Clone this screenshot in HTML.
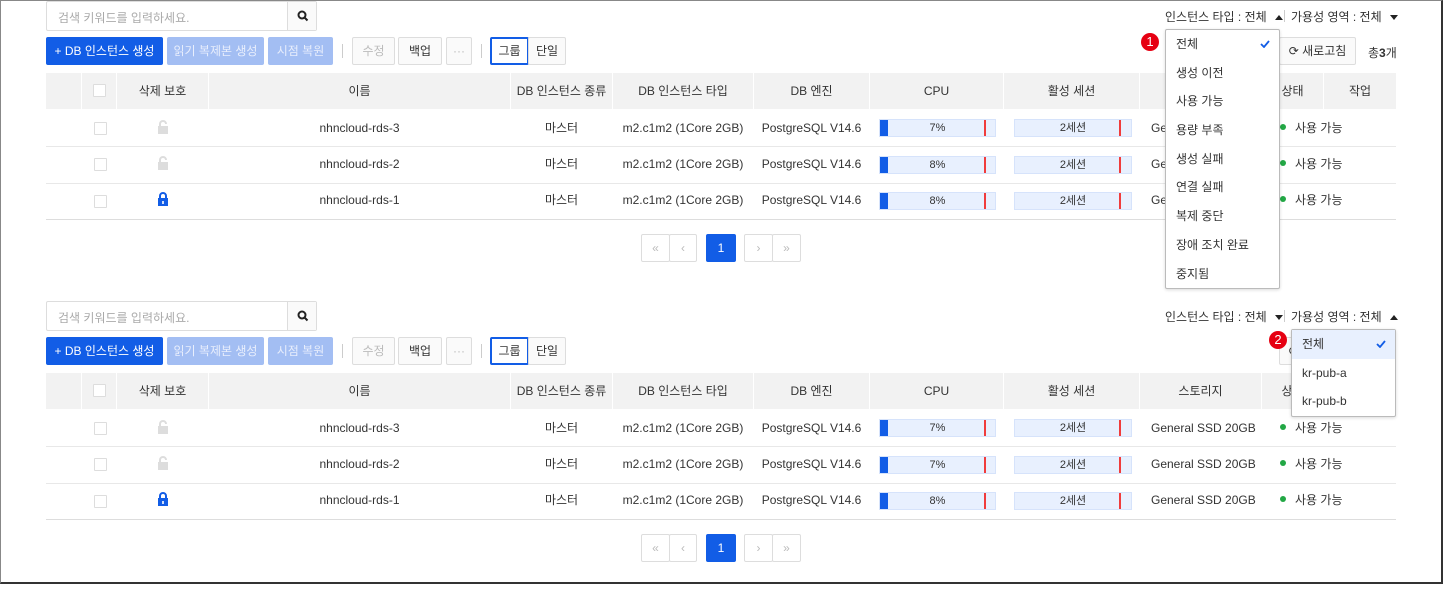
<!DOCTYPE html>
<html><head><meta charset="utf-8"><style>
*{box-sizing:border-box;margin:0;padding:0}
body{width:1443px;height:584px;background:#fff;position:relative;overflow:hidden;font-family:"Liberation Sans","Noto Sans CJK KR",sans-serif;font-size:12px;color:#333}
.frame{position:absolute;left:0;top:0;width:1443px;height:584px;border-left:1px solid #888;border-top:1px solid #888;border-right:2px solid #333;border-bottom:2px solid #333;z-index:50;pointer-events:none}
.sec{position:absolute;left:0;width:1443px;height:290px}
.a{position:absolute}
.search{left:46px;top:1px;width:271px;height:30px;border:1px solid #ddd;border-radius:2px;background:#fff}
.search span{position:absolute;left:11px;top:7px;color:#aaa;font-size:12px}
.search i{position:absolute;right:0;top:0;width:29px;height:28px;border-left:1px solid #ddd;background:#fafafa}
.btn{height:28px;top:37px;border-radius:2px;text-align:center;line-height:28px;font-size:12px}
.pri{background:#125de6;color:#fff}
.dis{background:#a3bef3;color:#e8eefc}
.wb{border:1px solid #ddd;background:#fafafa;color:#333;line-height:26px}
.wb.g{color:#bbb}
.sep{width:1px;height:14px;top:44px;background:#ccc}
.th{top:73px;height:36px;background:#f2f2f2;line-height:36px;text-align:center;font-size:12px;color:#333}
.row{left:46px;width:1350px;height:1px;background:#e8e8e8}
.td{height:36px;line-height:36px;text-align:center;font-size:12px;color:#333}
.cb{width:13px;height:13px;border:1px solid #ddd;background:#fff;border-radius:1px}
.bar{height:18px;background:#e8f0fe;border:1px solid #d6e3fb;text-align:center;line-height:16px;font-size:11px;color:#333}
.bar .bl{position:absolute;left:0;top:0;width:8px;height:16px;background:#125de6}
.bar .rd{position:absolute;top:0;left:104px;width:2px;height:16px;background:#f03c3c}
.dot{width:6px;height:6px;border-radius:50%;background:#22a745}
.pg{top:234px;height:28px;border:1px solid #ddd;border-radius:2px;background:#fff;color:#bbb;text-align:center;line-height:26px;font-size:12px}
.dd{background:#fff;border:1px solid #bbb;border-radius:2px;box-shadow:0 1px 3px rgba(0,0,0,.15);z-index:10}
.dd div{height:28.7px;line-height:28.7px;padding-left:10px;font-size:12px;color:#333;position:relative}
.chk{position:absolute;right:9px;top:10px}
.badge{width:18px;height:18px;border-radius:50%;background:#e60012;color:#fff;text-align:center;line-height:18px;font-size:13px;z-index:11}
.flt{top:8px;font-size:12px;color:#333}
.tri{display:inline-block;margin-left:8px;vertical-align:middle}
</style></head><body>
<div class="frame"></div>

<!-- SECTION 1 -->
<div class="sec" style="top:0">
<div class="a search"><span>검색 키워드를 입력하세요.</span><i><svg width="29" height="28" viewBox="0 0 29 28"><circle cx="14" cy="13" r="3.5" fill="none" stroke="#222" stroke-width="2"/><path d="M16.5 15.5l3 3" stroke="#222" stroke-width="2"/></svg></i></div>
<div class="a flt" style="left:1165px">인스턴스 타입 : 전체<svg class="tri" width="8" height="5"><path d="M0 5L4 0L8 5Z" fill="#222"/></svg></div>
<div class="a" style="left:1284px;top:10px;width:1px;height:12px;background:#ccc"></div>
<div class="a flt" style="left:1291px">가용성 영역 : 전체<svg class="tri" width="8" height="5"><path d="M0 0L4 5L8 0Z" fill="#222"/></svg></div>

<div class="a btn pri" style="left:46px;width:117px">+ DB 인스턴스 생성</div>
<div class="a btn dis" style="left:167px;width:97px">읽기 복제본 생성</div>
<div class="a btn dis" style="left:268px;width:65px">시점 복원</div>
<div class="a sep" style="left:342px"></div>
<div class="a btn wb g" style="left:352px;width:43px">수정</div>
<div class="a btn wb" style="left:398px;width:44px">백업</div>
<div class="a btn wb g" style="left:446px;width:26px">···</div>
<div class="a sep" style="left:481px"></div>
<div class="a btn wb" style="left:490px;width:39px;border:2px solid #125de6;background:#fff;line-height:24px">그룹</div>
<div class="a btn wb" style="left:528px;width:38px">단일</div>
<div class="a btn wb" style="left:1279px;width:77px">⟳ 새로고침</div>
<div class="a" style="left:1368px;top:44px">총<b>3</b>개</div>

<div class="a th" style="left:46px;width:35px"></div>
<div class="a th" style="left:82px;width:34px"><div class="a cb" style="left:11px;top:11px"></div></div>
<div class="a th" style="left:117px;width:91px">삭제 보호</div>
<div class="a th" style="left:209px;width:301px">이름</div>
<div class="a th" style="left:511px;width:101px">DB 인스턴스 종류</div>
<div class="a th" style="left:613px;width:140px">DB 인스턴스 타입</div>
<div class="a th" style="left:754px;width:115px">DB 엔진</div>
<div class="a th" style="left:870px;width:133px">CPU</div>
<div class="a th" style="left:1004px;width:135px">활성 세션</div>
<div class="a th" style="left:1140px;width:121px">스토리지</div>
<div class="a th" style="left:1262px;width:61px">상태</div>
<div class="a th" style="left:1324px;width:72px">작업</div>

<div class="a cb" style="left:94px;top:122px"></div>
<div class="a cb" style="left:94px;top:158px"></div>
<div class="a cb" style="left:94px;top:195px"></div>
<svg class="a" style="left:157px;top:120px" width="12" height="14"><path d="M3 6V4a3 3 0 0 1 6 0" fill="none" stroke="#ddd" stroke-width="2"/><rect x="1" y="6" width="10" height="8" fill="#ddd"/></svg>
<svg class="a" style="left:157px;top:156px" width="12" height="14"><path d="M3 6V4a3 3 0 0 1 6 0" fill="none" stroke="#ddd" stroke-width="2"/><rect x="1" y="6" width="10" height="8" fill="#ddd"/></svg>
<svg class="a" style="left:157px;top:192px" width="12" height="14"><path d="M3 7V4a3 3 0 0 1 6 0v3" fill="none" stroke="#125de6" stroke-width="2"/><rect x="1" y="6" width="10" height="8" fill="#125de6"/><rect x="5.2" y="9" width="1.6" height="3" fill="#fff"/></svg>

<div class="a td" style="left:209px;width:301px;top:110px">nhncloud-rds-3</div>
<div class="a td" style="left:209px;width:301px;top:146px">nhncloud-rds-2</div>
<div class="a td" style="left:209px;width:301px;top:182px">nhncloud-rds-1</div>
<div class="a td" style="left:511px;width:101px;top:110px">마스터</div>
<div class="a td" style="left:511px;width:101px;top:146px">마스터</div>
<div class="a td" style="left:511px;width:101px;top:182px">마스터</div>
<div class="a td" style="left:613px;width:140px;top:110px">m2.c1m2 (1Core 2GB)</div>
<div class="a td" style="left:613px;width:140px;top:146px">m2.c1m2 (1Core 2GB)</div>
<div class="a td" style="left:613px;width:140px;top:182px">m2.c1m2 (1Core 2GB)</div>
<div class="a td" style="left:754px;width:115px;top:110px">PostgreSQL V14.6</div>
<div class="a td" style="left:754px;width:115px;top:146px">PostgreSQL V14.6</div>
<div class="a td" style="left:754px;width:115px;top:182px">PostgreSQL V14.6</div>
<div class="a bar" style="left:879px;width:117px;top:119px"><span class="bl"></span><span class="rd"></span>7%</div>
<div class="a bar" style="left:879px;width:117px;top:156px"><span class="bl"></span><span class="rd"></span>8%</div>
<div class="a bar" style="left:879px;width:117px;top:192px"><span class="bl"></span><span class="rd"></span>8%</div>
<div class="a bar" style="left:1014px;width:118px;top:119px"><span class="rd"></span>2세션</div>
<div class="a bar" style="left:1014px;width:118px;top:156px"><span class="rd"></span>2세션</div>
<div class="a bar" style="left:1014px;width:118px;top:192px"><span class="rd"></span>2세션</div>
<div class="a td" style="left:1151px;top:110px">General SSD 20GB</div>
<div class="a td" style="left:1151px;top:146px">General SSD 20GB</div>
<div class="a td" style="left:1151px;top:182px">General SSD 20GB</div>
<div class="a dot" style="left:1280px;top:124px"></div><div class="a" style="left:1295px;top:119px">사용 가능</div>
<div class="a dot" style="left:1280px;top:160px"></div><div class="a" style="left:1295px;top:155px">사용 가능</div>
<div class="a dot" style="left:1280px;top:196px"></div><div class="a" style="left:1295px;top:191px">사용 가능</div>
<div class="a row" style="top:146px"></div>
<div class="a row" style="top:183px"></div>
<div class="a row" style="top:219px;background:#ddd"></div>

<div class="a pg" style="left:641px;width:29px">«</div>
<div class="a pg" style="left:669px;width:28px">‹</div>
<div class="a pg" style="left:706px;width:30px;background:#125de6;border-color:#125de6;color:#fff">1</div>
<div class="a pg" style="left:744px;width:29px">›</div>
<div class="a pg" style="left:772px;width:29px">»</div>

<div class="a badge" style="left:1141px;top:33px">1</div>
<div class="a dd" style="left:1165px;top:29px;width:115px;height:260px">
<div>전체<svg class="chk" width="10" height="8"><path d="M1 4l3 3 5-6" fill="none" stroke="#125de6" stroke-width="1.8"/></svg></div><div>생성 이전</div><div>사용 가능</div><div>용량 부족</div><div>생성 실패</div><div>연결 실패</div><div>복제 중단</div><div>장애 조치 완료</div><div>중지됨</div>
</div>
</div>

<!-- SECTION 2 -->
<div class="sec" style="top:300px">
<div class="a search"><span>검색 키워드를 입력하세요.</span><i><svg width="29" height="28" viewBox="0 0 29 28"><circle cx="14" cy="13" r="3.5" fill="none" stroke="#222" stroke-width="2"/><path d="M16.5 15.5l3 3" stroke="#222" stroke-width="2"/></svg></i></div>
<div class="a flt" style="left:1165px">인스턴스 타입 : 전체<svg class="tri" width="8" height="5"><path d="M0 0L4 5L8 0Z" fill="#222"/></svg></div>
<div class="a" style="left:1284px;top:10px;width:1px;height:12px;background:#ccc"></div>
<div class="a flt" style="left:1291px">가용성 영역 : 전체<svg class="tri" width="8" height="5"><path d="M0 5L4 0L8 5Z" fill="#222"/></svg></div>

<div class="a btn pri" style="left:46px;width:117px">+ DB 인스턴스 생성</div>
<div class="a btn dis" style="left:167px;width:97px">읽기 복제본 생성</div>
<div class="a btn dis" style="left:268px;width:65px">시점 복원</div>
<div class="a sep" style="left:342px"></div>
<div class="a btn wb g" style="left:352px;width:43px">수정</div>
<div class="a btn wb" style="left:398px;width:44px">백업</div>
<div class="a btn wb g" style="left:446px;width:26px">···</div>
<div class="a sep" style="left:481px"></div>
<div class="a btn wb" style="left:490px;width:39px;border:2px solid #125de6;background:#fff;line-height:24px">그룹</div>
<div class="a btn wb" style="left:528px;width:38px">단일</div>
<div class="a btn wb" style="left:1279px;width:77px">⟳ 새로고침</div>

<div class="a th" style="left:46px;width:35px"></div>
<div class="a th" style="left:82px;width:34px"><div class="a cb" style="left:11px;top:11px"></div></div>
<div class="a th" style="left:117px;width:91px">삭제 보호</div>
<div class="a th" style="left:209px;width:301px">이름</div>
<div class="a th" style="left:511px;width:101px">DB 인스턴스 종류</div>
<div class="a th" style="left:613px;width:140px">DB 인스턴스 타입</div>
<div class="a th" style="left:754px;width:115px">DB 엔진</div>
<div class="a th" style="left:870px;width:133px">CPU</div>
<div class="a th" style="left:1004px;width:135px">활성 세션</div>
<div class="a th" style="left:1140px;width:121px">스토리지</div>
<div class="a th" style="left:1262px;width:61px">상태</div>
<div class="a th" style="left:1324px;width:72px">작업</div>

<div class="a cb" style="left:94px;top:122px"></div>
<div class="a cb" style="left:94px;top:158px"></div>
<div class="a cb" style="left:94px;top:195px"></div>
<svg class="a" style="left:157px;top:120px" width="12" height="14"><path d="M3 6V4a3 3 0 0 1 6 0" fill="none" stroke="#ddd" stroke-width="2"/><rect x="1" y="6" width="10" height="8" fill="#ddd"/></svg>
<svg class="a" style="left:157px;top:156px" width="12" height="14"><path d="M3 6V4a3 3 0 0 1 6 0" fill="none" stroke="#ddd" stroke-width="2"/><rect x="1" y="6" width="10" height="8" fill="#ddd"/></svg>
<svg class="a" style="left:157px;top:192px" width="12" height="14"><path d="M3 7V4a3 3 0 0 1 6 0v3" fill="none" stroke="#125de6" stroke-width="2"/><rect x="1" y="6" width="10" height="8" fill="#125de6"/><rect x="5.2" y="9" width="1.6" height="3" fill="#fff"/></svg>

<div class="a td" style="left:209px;width:301px;top:110px">nhncloud-rds-3</div>
<div class="a td" style="left:209px;width:301px;top:146px">nhncloud-rds-2</div>
<div class="a td" style="left:209px;width:301px;top:182px">nhncloud-rds-1</div>
<div class="a td" style="left:511px;width:101px;top:110px">마스터</div>
<div class="a td" style="left:511px;width:101px;top:146px">마스터</div>
<div class="a td" style="left:511px;width:101px;top:182px">마스터</div>
<div class="a td" style="left:613px;width:140px;top:110px">m2.c1m2 (1Core 2GB)</div>
<div class="a td" style="left:613px;width:140px;top:146px">m2.c1m2 (1Core 2GB)</div>
<div class="a td" style="left:613px;width:140px;top:182px">m2.c1m2 (1Core 2GB)</div>
<div class="a td" style="left:754px;width:115px;top:110px">PostgreSQL V14.6</div>
<div class="a td" style="left:754px;width:115px;top:146px">PostgreSQL V14.6</div>
<div class="a td" style="left:754px;width:115px;top:182px">PostgreSQL V14.6</div>
<div class="a bar" style="left:879px;width:117px;top:119px"><span class="bl"></span><span class="rd"></span>7%</div>
<div class="a bar" style="left:879px;width:117px;top:156px"><span class="bl"></span><span class="rd"></span>7%</div>
<div class="a bar" style="left:879px;width:117px;top:192px"><span class="bl"></span><span class="rd"></span>8%</div>
<div class="a bar" style="left:1014px;width:118px;top:119px"><span class="rd"></span>2세션</div>
<div class="a bar" style="left:1014px;width:118px;top:156px"><span class="rd"></span>2세션</div>
<div class="a bar" style="left:1014px;width:118px;top:192px"><span class="rd"></span>2세션</div>
<div class="a td" style="left:1151px;top:110px">General SSD 20GB</div>
<div class="a td" style="left:1151px;top:146px">General SSD 20GB</div>
<div class="a td" style="left:1151px;top:182px">General SSD 20GB</div>
<div class="a dot" style="left:1280px;top:124px"></div><div class="a" style="left:1295px;top:119px">사용 가능</div>
<div class="a dot" style="left:1280px;top:160px"></div><div class="a" style="left:1295px;top:155px">사용 가능</div>
<div class="a dot" style="left:1280px;top:196px"></div><div class="a" style="left:1295px;top:191px">사용 가능</div>
<div class="a row" style="top:146px"></div>
<div class="a row" style="top:183px"></div>
<div class="a row" style="top:219px;background:#ddd"></div>

<div class="a pg" style="left:641px;width:29px">«</div>
<div class="a pg" style="left:669px;width:28px">‹</div>
<div class="a pg" style="left:706px;width:30px;background:#125de6;border-color:#125de6;color:#fff">1</div>
<div class="a pg" style="left:744px;width:29px">›</div>
<div class="a pg" style="left:772px;width:29px">»</div>

<div class="a badge" style="left:1269px;top:31px">2</div>
<div class="a dd" style="left:1291px;top:29px;width:105px;height:88px">
<div style="background:#e8f0fe">전체<svg class="chk" width="10" height="8"><path d="M1 4l3 3 5-6" fill="none" stroke="#125de6" stroke-width="1.8"/></svg></div><div>kr-pub-a</div><div>kr-pub-b</div>
</div>
</div>
</body></html>
